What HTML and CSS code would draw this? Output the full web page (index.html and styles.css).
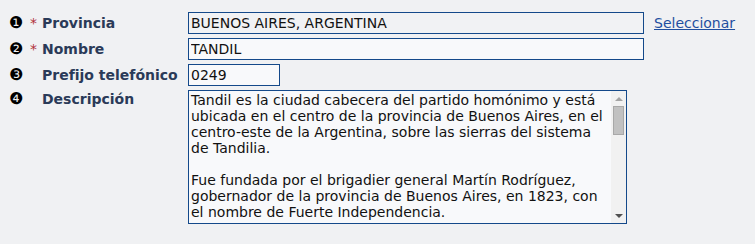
FILE: index.html
```html
<!DOCTYPE html>
<html lang="es">
<head>
<meta charset="UTF-8">
<title>Ciudad</title>
<link rel="stylesheet" href="styles.css">
</head>
<body>
<div class="form">
  <div class="row">
    <span class="num">❶</span>
    <span class="req">*</span>
    <label class="lbl">Provincia</label>
    <input type="text" class="field wide readonly" value="BUENOS AIRES, ARGENTINA" readonly>
    <a href="#" class="pick">Seleccionar</a>
  </div>
  <div class="row">
    <span class="num">❷</span>
    <span class="req">*</span>
    <label class="lbl">Nombre</label>
    <input type="text" class="field wide" value="TANDIL">
  </div>
  <div class="row">
    <span class="num">❸</span>
    <span class="req"></span>
    <label class="lbl">Prefijo telefónico</label>
    <input type="text" class="field short" value="0249">
  </div>
  <div class="row top">
    <span class="num">❹</span>
    <span class="req"></span>
    <label class="lbl">Descripción</label>
    <div class="desc-box">
      <textarea class="desc">Tandil es la ciudad cabecera del partido homónimo y está ubicada en el centro de la provincia de Buenos Aires, en el centro-este de la Argentina, sobre las sierras del sistema de Tandilia.

Fue fundada por el brigadier general Martín Rodríguez, gobernador de la provincia de Buenos Aires, en 1823, con el nombre de Fuerte Independencia.

La ciudad es conocida por sus paisajes serranos, su producción de quesos y embutidos, y por la célebre Piedra Movediza.</textarea>
      <div class="scroll">
        <span class="arrow up"></span>
        <div class="track"><div class="thumb"></div></div>
        <span class="arrow down"></span>
      </div>
    </div>
  </div>
</div>
</body>
</html>
```

FILE: styles.css
```css
body {
  margin: 0;
  padding: 12px 0 0 9px;
  background-color: #f0f1f3;
  font-family: "DejaVu Sans", Verdana, sans-serif;
  font-size: 14px;
  color: #111;
}
.form {
  display: flex;
  flex-direction: column;
  gap: 4px;
}
.row {
  display: flex;
  align-items: center;
}
.row.top {
  align-items: flex-start;
}
.num {
  width: 21px;
  line-height: 22px;
  font-size: 16px;
  color: #000;
}
.req {
  width: 12px;
  line-height: 22px;
  color: #b0303a;
}
.lbl {
  width: 146px;
  line-height: 22px;
  font-weight: bold;
  color: #2a3a58;
}
.row.top .num,
.row.top .req,
.row.top .lbl {
  line-height: 18px;
}
.field {
  box-sizing: border-box;
  margin: 0;
  border: 1px solid #14498a;
  border-radius: 0;
  padding: 0 2px;
  background-color: #f8f9fb;
  font-family: "DejaVu Sans", Verdana, sans-serif;
  font-size: 14px;
  color: #111;
  outline: none;
}
input.field {
  height: 22px;
}
.wide {
  width: 456px;
}
.short {
  width: 92px;
}
.readonly {
  background-color: #f1f2f4;
}
.desc-box {
  box-sizing: border-box;
  display: flex;
  width: 439px;
  height: 134px;
  border: 1px solid #14498a;
  background-color: #f8f9fb;
}
.desc {
  flex: 1;
  margin: 0;
  border: none;
  padding: 1px 0 1px 2px;
  background: transparent;
  font-family: "DejaVu Sans", Verdana, sans-serif;
  font-size: 14px;
  line-height: 16px;
  color: #111;
  resize: none;
  overflow: hidden;
  outline: none;
}
.scroll {
  width: 15px;
  display: flex;
  flex-direction: column;
  background-color: #f1f1f1;
}
.arrow {
  height: 15px;
  display: flex;
  align-items: center;
  justify-content: center;
}
.arrow::before {
  content: "";
  border-left: 4px solid transparent;
  border-right: 4px solid transparent;
}
.arrow.up::before {
  border-bottom: 4px solid #a3a3a3;
}
.arrow.down::before {
  border-top: 4px solid #505050;
}
.track {
  flex: 1;
  padding: 0 2px;
}
.thumb {
  box-sizing: border-box;
  height: 29px;
  background-color: #c1c1c1;
  border: 1px solid #a8a8a8;
}
.pick {
  margin-left: 10px;
  color: #1f4fa0;
}
```
